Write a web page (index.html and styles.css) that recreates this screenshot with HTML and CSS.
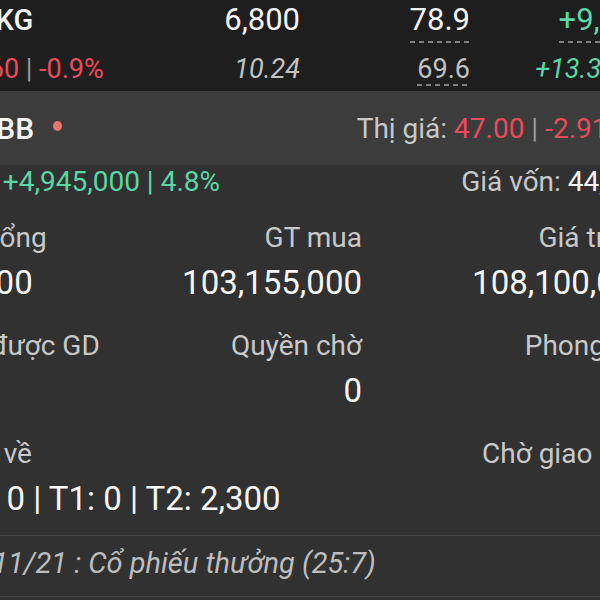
FILE: index.html
```html
<!DOCTYPE html>
<html lang="vi">
  <head>
    <meta charset="UTF-8" />
    <meta name="viewport" content="width=device-width, initial-scale=1.0" />
    <title>Danh mục</title>
    <link rel="stylesheet" href="styles.css">
  </head>
  <body>
    <div class="screen">
      <div class="quote">
        <div class="quote-row top">
          <div class="sym">NKG</div>
          <div>6,800</div>
          <div><span class="dash">78.9</span></div>
          <div class="up"><span class="dash">+9,300</span></div>
        </div>
        <div class="quote-row sub">
          <div class="chg down">-0.60 <span class="bar">|</span> -0.9%</div>
          <div class="muted italic">10.24</div>
          <div class="muted"><span class="dash">69.6</span></div>
          <div class="up italic pct">+13.36%</div>
        </div>
      </div>

      <div class="stock-head">
        <div class="stock-name">MBB <span class="dot"></span></div>
        <div class="stock-price">
          Thị giá: <span class="down">47.00</span> <span class="bar">|</span> <span class="down">-2.91%</span>
        </div>
      </div>

      <div class="detail">
        <div class="profit">
          <div><span class="label">Lãi: </span><span class="up">+4,945,000 | 4.8%</span></div>
          <div class="label">Giá vốn: <span class="cost">44,850</span></div>
        </div>

        <div class="grid">
          <div class="label">SL tổng</div>
          <div class="label">GT mua</div>
          <div class="label">Giá trị TT</div>
          <div class="value">2,300</div>
          <div class="value">103,155,000</div>
          <div class="value">108,100,000</div>
        </div>

        <div class="grid">
          <div class="label">SL được GD</div>
          <div class="label">Quyền chờ</div>
          <div class="label">Phong tỏa</div>
          <div class="value">0</div>
          <div class="value">0</div>
          <div class="value"></div>
        </div>

        <div class="grid">
          <div class="label pending">SL chờ về</div>
          <div class="label"></div>
          <div class="label">Chờ giao dịch</div>
          <div class="value wide">T0: 0 | T1: 0 | T2: 2,300</div>
          <div class="value"></div>
          <div class="value"></div>
        </div>
      </div>

      <div class="note">25/11/21 : Cổ phiếu thưởng (25:7)</div>
    </div>
  </body>
</html>
```

FILE: styles.css
```css
* {
  margin: 0;
  padding: 0;
  box-sizing: border-box;
}

body {
  font-family: "Roboto", "Noto Sans", sans-serif;
  background-color: #313131;
  color: #f4f4f4;
  overflow: hidden;
  height: 100vh;
}

.screen {
  width: 724px;
  margin-left: -60px;
}

.up {
  color: #5bd6a6;
}

.down {
  color: #ea4b5c;
}

.muted {
  color: #c2c2c2;
}

.italic {
  font-style: italic;
}

.bar {
  color: #9a9a9a;
}

/* top quote band */
.quote {
  background-color: #1e1e1e;
  padding: 0 12px;
  height: 91px;
}

.quote-row {
  display: grid;
  grid-template-columns: 1fr 130px 170px 182px;
  text-align: right;
}

.quote-row.top {
  font-size: 31px;
  line-height: 40px;
  height: 43px;
}

.quote-row.top .dash {
  padding-bottom: 3px;
}

.quote-row.sub {
  font-size: 27px;
  line-height: 34px;
  margin-top: 9px;
}

.quote-row .sym {
  text-align: left;
  font-weight: 500;
  font-size: 29px;
  padding-left: 23px;
}

.quote-row .chg {
  text-align: left;
  padding-left: 7px;
}

.quote-row .pct {
  margin-right: 17px;
}

.dash {
  display: inline-block;
  vertical-align: top;
  background: repeating-linear-gradient(to right, #808080 0 5px, transparent 5px 9px) left bottom / 100% 2px no-repeat;
}

/* stock header */
.stock-head {
  background-color: #3c3c3c;
  height: 74px;
  display: flex;
  align-items: center;
  justify-content: space-between;
  padding: 0 36px 0 12px;
  font-size: 28px;
}

.stock-name {
  font-weight: 500;
  font-size: 30px;
  padding-left: 18px;
  display: flex;
  align-items: center;
}

.dot {
  display: inline-block;
  width: 9px;
  height: 10px;
  border-radius: 50%;
  background-color: #e8766a;
  margin-left: 19px;
  margin-top: -5px;
}

.stock-price {
  color: #c8c8c8;
}

/* detail */
.detail {
  padding: 0 12px;
}

.label {
  color: #c8c8c8;
  font-size: 28px;
  line-height: 42px;
}

.value {
  color: #f6f6f6;
  font-size: 33px;
  line-height: 48px;
}

.profit {
  display: flex;
  justify-content: space-between;
  font-size: 28px;
  line-height: 34px;
}

.profit .label {
  line-height: 34px;
}

.cost {
  color: #f6f6f6;
}

.grid {
  display: grid;
  grid-template-columns: 200px 210px 1fr;
  margin-top: 18px;
}

.grid + .grid {
  margin-top: 18px;
}

.grid > :nth-child(3n+2),
.grid > :nth-child(3n) {
  text-align: right;
}

.grid .pending {
  text-indent: -40px;
}

.grid .wide {
  white-space: nowrap;
}

.note {
  margin: 12px 0 0;
  border-top: 1px solid #464646;
  border-bottom: 1px solid #464646;
  padding: 0 12px 6px 9px;
  line-height: 54px;
  font-size: 29px;
  font-style: italic;
  color: #bdbdbd;
  white-space: nowrap;
}
```
